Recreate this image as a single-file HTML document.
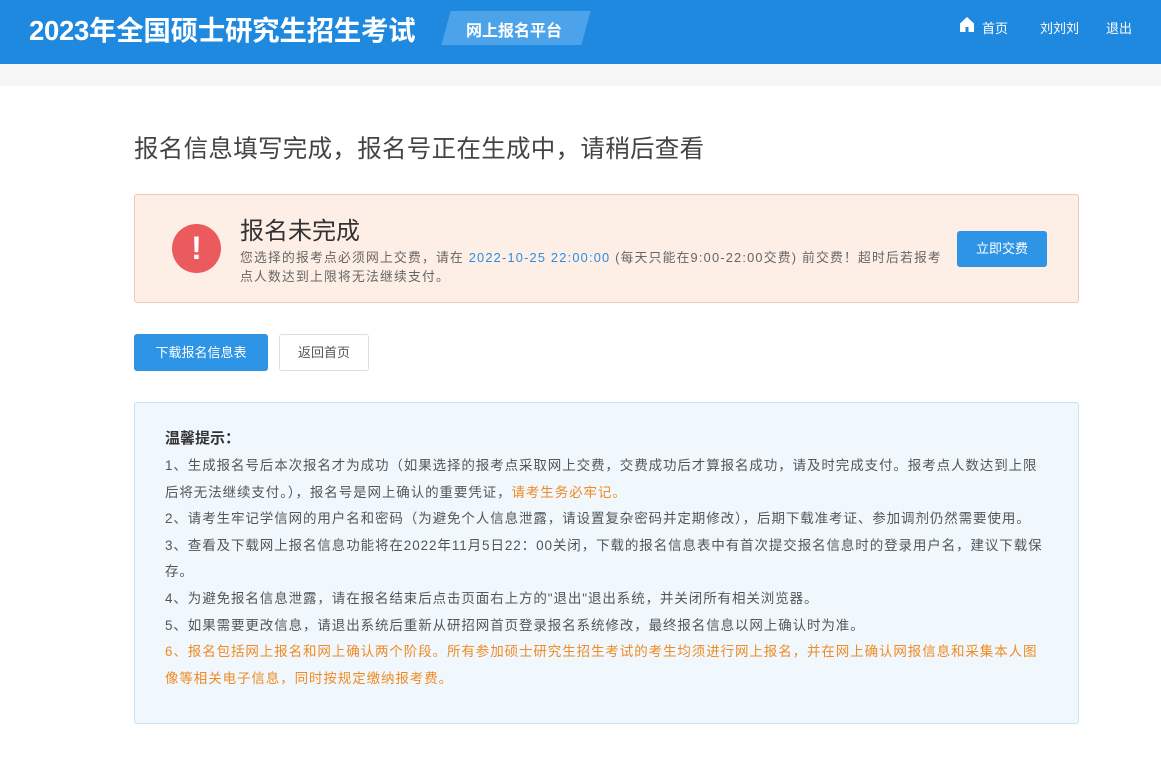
<!DOCTYPE html>
<html><head><meta charset="utf-8"><style>
*{margin:0;padding:0;box-sizing:border-box}
body{width:1161px;height:777px;overflow:hidden;background:#f6f6f6;font-family:"Liberation Sans","Noto Sans CJK SC",sans-serif;position:relative}
.hd{position:absolute;left:0;top:0;width:1161px;height:64px;background:#1f88df}
.title{position:absolute;left:29px;top:8px;color:#fff;font-size:27.5px;font-weight:bold;letter-spacing:-0.3px}
.tag{position:absolute;left:446px;top:11px;width:140px;height:34px;background:#4da3ea;transform:skewX(-15deg)}
.tagt{position:absolute;left:466px;top:17px;color:#fff;font-size:16px;font-weight:bold}
.nav{position:absolute;top:18px;color:#fff;font-size:13px}
.main{position:absolute;left:0;top:86px;width:1161px;height:691px;background:#fff}
h1{position:absolute;left:134px;top:130px;font-size:24.5px;font-weight:normal;color:#444;letter-spacing:0.3px}
.alert{position:absolute;left:134px;top:194px;width:945px;height:109px;background:#fdeee6;border:1px solid #f3c6b8;border-radius:3px}
.ic{position:absolute;left:37px;top:29px;width:49px;height:49px;border-radius:50%;background:#eb5b5d;color:#fff;font-size:32px;font-weight:bold;text-align:center;line-height:49px}
.at{position:absolute;left:105px;top:16px;font-size:24px;color:#333}
.ad{position:absolute;left:105px;top:53px;width:720px;font-size:12.8px;line-height:19px;color:#666;letter-spacing:1.2px;white-space:nowrap}
.ad span{color:#2d8ee0}
.pay{position:absolute;left:822px;top:36px;width:90px;height:36px;background:#2d94e6;color:#fff;font-size:13px;text-align:center;line-height:36px;border-radius:3px}
.b1{position:absolute;left:134px;top:334px;width:134px;height:37px;background:#2d94e6;color:#fff;font-size:13px;text-align:center;line-height:37px;border-radius:3px}
.b2{position:absolute;left:279px;top:334px;width:90px;height:37px;border:1px solid #ddd;color:#555;font-size:13px;text-align:center;line-height:35px;border-radius:3px;background:#fff}
.tip{position:absolute;left:134px;top:402px;width:945px;height:322px;background:#f0f8fd;border:1px solid #c6e2f4;border-radius:3px}
.tt{position:absolute;left:30px;top:24px;font-size:15px;font-weight:bold;color:#333}
.tb{position:absolute;left:30px;top:50px;width:884px;font-size:13.5px;line-height:26.6px;color:#555;letter-spacing:0.9px}
.o{color:#f08a24}
</style></head><body>
<div class="hd">
<div class="title">2023年全国硕士研究生招生考试</div>
<div class="tag"></div><div class="tagt">网上报名平台</div>
<svg style="position:absolute;left:960px;top:17px" width="14" height="15" viewBox="0 0 14 15"><path d="M7 0L0 6.5V15H5.5V10H8.5V15H14V6.5Z" fill="#fff"/></svg>
<div class="nav" style="left:982px">首页</div>
<div class="nav" style="left:1040px">刘刘刘</div>
<div class="nav" style="left:1106px">退出</div>
</div>
<div class="main"></div>
<h1>报名信息填写完成，报名号正在生成中，请稍后查看</h1>
<div class="alert">
<div class="ic">!</div>
<div class="at">报名未完成</div>
<div class="ad">您选择的报考点必须网上交费，请在 <span>2022-10-25 22:00:00</span> (每天只能在9:00-22:00交费) 前交费！超时后若报考<br>点人数达到上限将无法继续支付。</div>
<div class="pay">立即交费</div>
</div>
<div class="b1">下载报名信息表</div>
<div class="b2">返回首页</div>
<div class="tip">
<div class="tt">温馨提示：</div>
<div class="tb">1、生成报名号后本次报名才为成功（如果选择的报考点采取网上交费，交费成功后才算报名成功，请及时完成支付。报考点人数达到上限后将无法继续支付。），报名号是网上确认的重要凭证，<span class="o">请考生务必牢记。</span><br>
2、请考生牢记学信网的用户名和密码（为避免个人信息泄露，请设置复杂密码并定期修改），后期下载准考证、参加调剂仍然需要使用。<br>
3、查看及下载网上报名信息功能将在2022年11月5日22：00关闭，下载的报名信息表中有首次提交报名信息时的登录用户名，建议下载保存。<br>
4、为避免报名信息泄露，请在报名结束后点击页面右上方的"退出"退出系统，并关闭所有相关浏览器。<br>
5、如果需要更改信息，请退出系统后重新从研招网首页登录报名系统修改，最终报名信息以网上确认时为准。<br>
<span class="o">6、报名包括网上报名和网上确认两个阶段。所有参加硕士研究生招生考试的考生均须进行网上报名，并在网上确认网报信息和采集本人图像等相关电子信息，同时按规定缴纳报考费。</span></div>
</div>
</body></html>
